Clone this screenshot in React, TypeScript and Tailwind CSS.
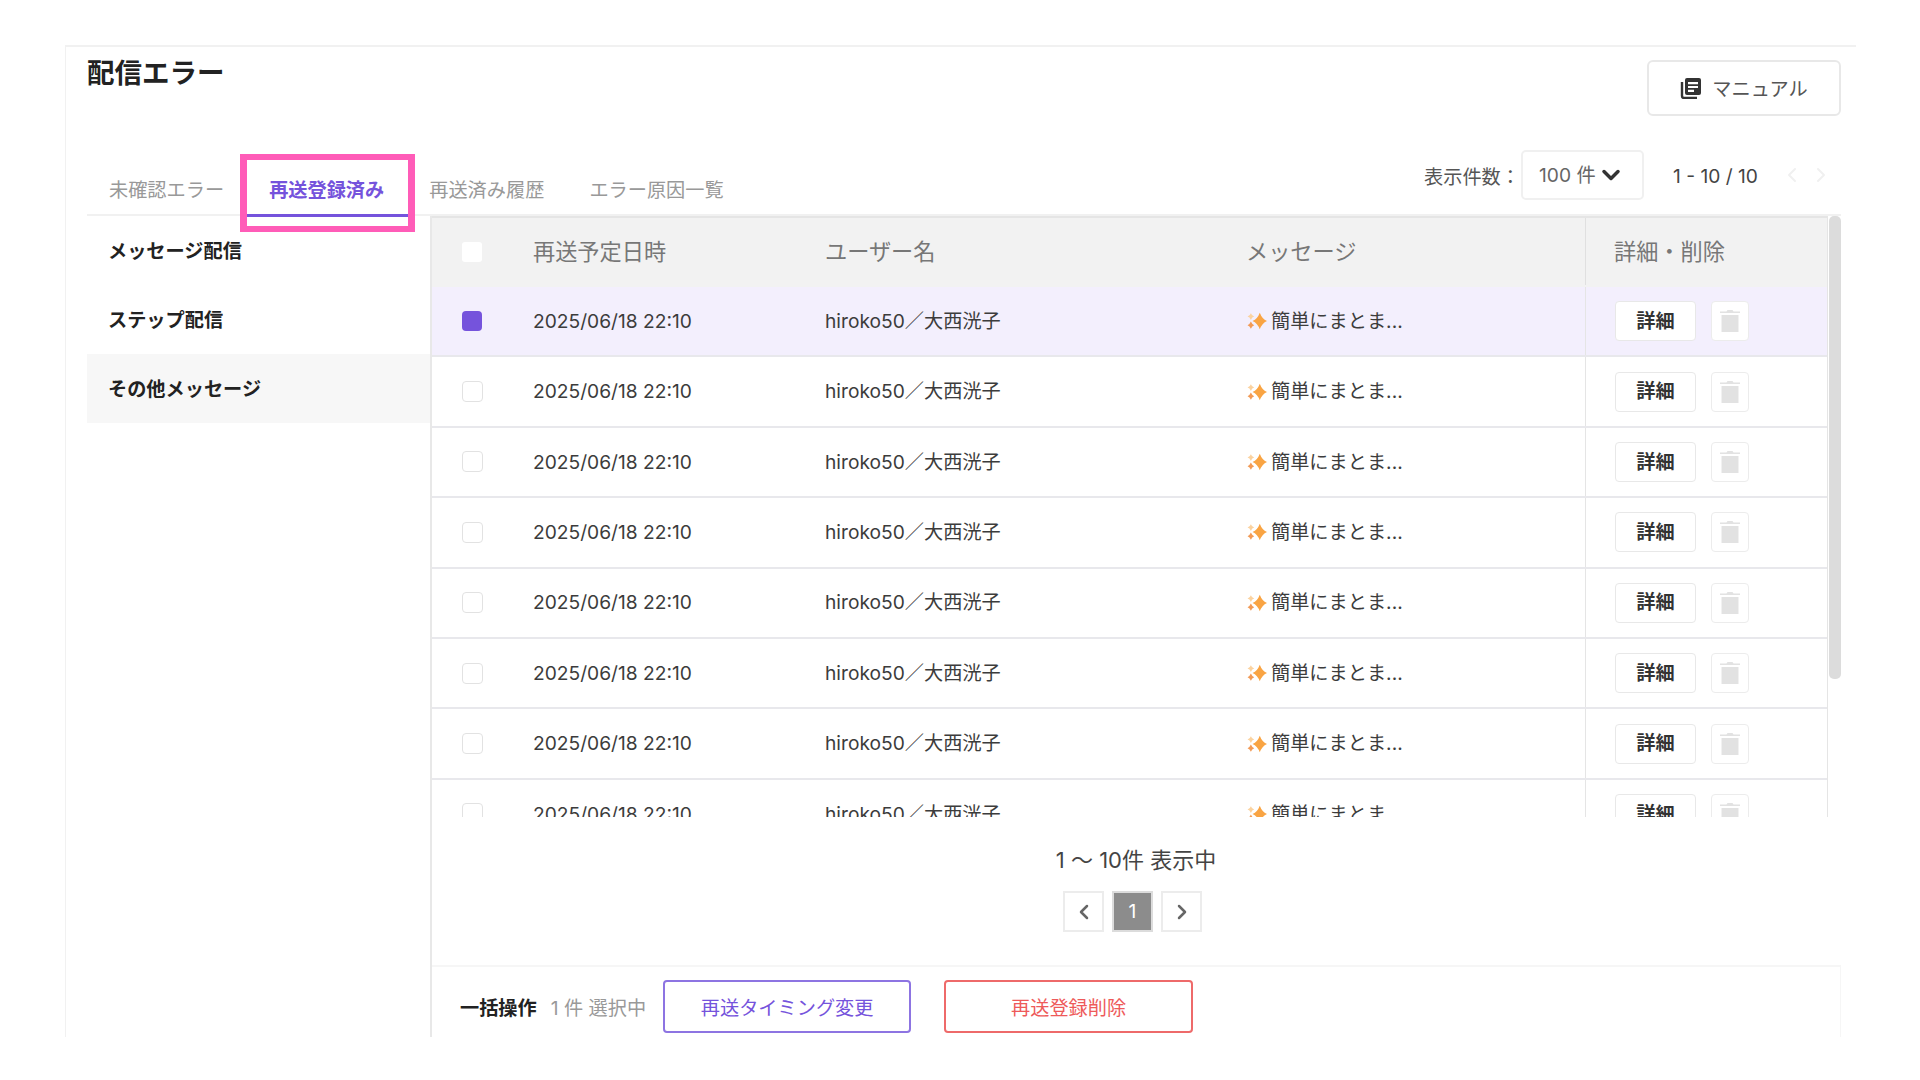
import { ChevronDown, ChevronLeft, ChevronRight } from "lucide-react";

function Sparkle() {
  return (
    <svg viewBox="0 0 18 18" className="w-[20px] h-[20px] shrink-0">
      <path d="M11.500 1.500 Q13.500 7 18 9 Q13.500 11 11.500 16.500 Q9.500 11 5 9 Q9.500 7 11.500 1.500Z" fill="#f9a443" />
      <path d="M3.500 2 Q4.500 4.500 6.500 5 Q4.500 5.500 3.500 8 Q2.500 5.500 0.500 5 Q2.500 4.500 3.500 2Z" fill="#fbd3a0" />
      <path d="M3.500 9.500 Q4.500 12 6.500 12.800 Q4.500 13.500 3.500 16 Q2.500 13.500 0.500 12.800 Q2.500 12 3.500 9.500Z" fill="#f29a55" />
    </svg>
  );
}

function Trash() {
  return (
    <svg viewBox="0 0 20 22" className="w-[20px] h-[22px]">
      <path d="M7.500 0h5l1 1.500H20v1.500H0V1.500h6.500z" fill="#e2e2e2" />
      <path d="M1.500 5h17v17h-17z" fill="#e2e2e2" />
    </svg>
  );
}

function ManualIcon() {
  return (
    <svg viewBox="0 0 22 22" className="w-[22px] h-[22px]">
      <path d="M2 5v14a2 2 0 0 0 2 2h13" fill="none" stroke="#333" strokeWidth="2.400" />
      <path d="M7 1h12a2 2 0 0 1 2 2v13a2 2 0 0 1-2 2H7a2 2 0 0 1-2-2V3a2 2 0 0 1 2-2z" fill="#333" />
      <path d="M8 5h10v2.200H8zM8 9h10v2H8zM8 12.800h6V15H8z" fill="#fff" />
    </svg>
  );
}

function Row({ selected }: { selected?: boolean }) {
  return (
    <div
      className={`grid grid-cols-[101px_292px_422px_338px_243px] h-[70.4px] shrink-0 items-center border-b-2 border-[#e8e8ec] text-[19.2px] text-[#3c3c3c] ${
        selected ? "bg-[#f3effd]" : "bg-white"
      }`}
    >
      <div className="pl-[30px]">
        {selected ? (
          <div className="w-[20px] h-[20px] rounded-[4px] bg-[#7553dc]" />
        ) : (
          <div className="w-[21px] h-[21px] rounded-[4px] border border-[#e2e2e2] bg-white" />
        )}
      </div>
      <div>2025/06/18 22:10</div>
      <div>hiroko50／大西洸子</div>
      <div className="flex items-center gap-[4px]">
        <Sparkle />
        <span>簡単にまとま...</span>
      </div>
      <div className="h-full flex items-center gap-[15px] pl-[29px] border-l border-[#e5e5e5]">
        <button className="w-[81px] h-[40px] rounded-[4px] border border-[#e8e8e8] bg-white font-bold text-[#333]">
          詳細
        </button>
        <button className="w-[38px] h-[40px] rounded-[4px] border border-[#ececec] bg-white flex items-center justify-center">
          <Trash />
        </button>
      </div>
    </div>
  );
}

export default function App() {
  const tabs = ["未確認エラー", "再送登録済み", "再送済み履歴", "エラー原因一覧"];
  return (
    <div className="w-[1920px] h-[1080px] overflow-hidden bg-white pt-[45px] pl-[65px] font-[Inter,'Noto_Sans_CJK_JP',sans-serif]">
      <div className="w-[1791px] h-[992px] border-l border-t-2 border-[#f1f1f1] overflow-hidden flex flex-col pl-[21px]">
        <div className="flex justify-between items-start pr-[15px] pt-[12px] h-[103px] shrink-0">
          <h1 className="text-[27.500px] leading-[28px] font-bold text-[#222]">配信エラー</h1>
          <button className="w-[194px] h-[56px] mt-[1px] rounded-[6px] border-2 border-[#e8e8e8] bg-white flex items-center justify-center gap-[10px] text-[19.2px] text-[#555]">
            <ManualIcon />
            <span className="pt-[3px]">マニュアル</span>
          </button>
        </div>

        <div className="flex justify-between h-[66px] shrink-0 pr-[15px]">
          <div className="flex gap-[1px] items-stretch border-b-2 border-[#f1f1f1] flex-1">
            {tabs.map((t, i) => (
              <div
                key={t}
                className={`relative pl-[22px] pt-[26px] text-[19.2px] leading-[28px] ${
                  i === 1
                    ? "pr-[24px] -mr-[2px] font-bold text-[#7553dc] border-b-[3px] border-[#7553dc] -mb-[3px]"
                    : "pr-[22px] text-[#999999]"
                }`}
              >
                {t}
                {i === 1 && (
                  <div className="absolute left-[-7px] right-[-7px] top-[4px] h-[78px] border-x-[7px] border-y-[6px] border-[#ff5cb8]" />
                )}
              </div>
            ))}
            <div className="flex-1" />
          </div>
          <div className="flex items-start text-[19.2px] text-[#555] pb-[14px] pr-[8px] border-b-2 border-[#f1f1f1] shrink-0">
            <span className="mt-[13px] shrink-0">表示件数：</span>
            <div className="w-[123px] h-[50px] ml-[1px] shrink-0 rounded-[5px] border-2 border-[#f0f0f0] flex items-center pl-[16px] gap-[1px] text-[#666]">
              <span>100 件</span>
              <ChevronDown className="w-[28px] h-[28px] text-[#333]" strokeWidth={3} />
            </div>
            <span className="ml-[29px] mt-[12px] w-[87px] shrink-0 text-[#444] whitespace-nowrap">1 - 10 / 10</span>
            <ChevronLeft className="ml-[20px] mt-[13px] w-[24px] h-[24px] shrink-0 text-[#f0f0f0]" />
            <ChevronRight className="ml-[5px] mt-[13px] w-[24px] h-[24px] shrink-0 text-[#f0f0f0]" />
          </div>
        </div>

        <div className="flex flex-1 min-h-0">
          <div className="w-[343px] shrink-0 text-[19.2px] font-bold text-[#222]">
            <div className="h-[69px] pt-[1px] flex items-center pl-[21px]">メッセージ配信</div>
            <div className="h-[69px] pt-[1px] flex items-center pl-[21px]">ステップ配信</div>
            <div className="h-[69px] pt-[1px] flex items-center pl-[21px] bg-[#f7f7f7]">その他メッセージ</div>
          </div>
          <div className="w-[1411px] shrink-0 border-l-2 border-[#e8e8e8] flex flex-col">
            <div className="h-[601px] shrink-0 flex overflow-hidden">
              <div className="w-[1396px] shrink-0 flex flex-col border-t-2 border-r border-[#e5e5e5] overflow-hidden">
                <div className="grid grid-cols-[101px_292px_422px_338px_243px] h-[69px] pb-[2px] shrink-0 items-center bg-[#f2f2f2] text-[22.2px] text-[#777]">
                  <div className="pl-[30px]">
                    <div className="w-[20px] h-[20px] rounded-[3px] bg-white" />
                  </div>
                  <div>再送予定日時</div>
                  <div>ユーザー名</div>
                  <div className="-ml-[1px]">メッセージ</div>
                  <div className="h-full flex items-center pl-[28px] border-l border-[#e0e0e0]">詳細・削除</div>
                </div>
                <Row selected />
                {[0, 1, 2, 3, 4, 5, 6, 7, 8].map((i) => (
                  <Row key={i} />
                ))}
              </div>
              <div className="w-[12px] h-[463px] ml-[1px] rounded-[5px] bg-[#dcdcdc]" />
            </div>

            <div className="h-[148px] shrink-0 flex flex-col items-center pr-[8px] pt-[28px]">
              <div className="text-[22px] leading-[30px] text-[#444] pl-[7px]">1 〜 10件 表示中</div>
              <div className="flex gap-[8px] mt-[16px]">
                <div className="w-[41px] h-[41px] border-2 border-[#ececec] flex items-center justify-center">
                  <ChevronLeft className="w-[24px] h-[24px] text-[#666]" strokeWidth={2.500} />
                </div>
                <div className="w-[41px] h-[41px] bg-[#8c8c8c] border-2 border-[#dcdcdc] text-white flex items-center justify-center text-[19.2px]">
                  1
                </div>
                <div className="w-[41px] h-[41px] border-2 border-[#ececec] flex items-center justify-center">
                  <ChevronRight className="w-[24px] h-[24px] text-[#666]" strokeWidth={2.500} />
                </div>
              </div>
            </div>

            <div className="flex-1 border-t-2 border-r border-[#f6f6f6] flex items-start pl-[28px] pt-[13px] text-[19.2px]">
              <span className="font-bold text-[#222] mt-[14px] leading-[28px]">一括操作</span>
              <span className="ml-[14px] text-[#999] mt-[14px] leading-[28px]">1 件 選択中</span>
              <button className="ml-[17px] w-[248px] h-[53px] pt-[3px] rounded-[4px] border-2 border-[#8d74e2] text-[#7553dc] bg-white">
                再送タイミング変更
              </button>
              <button className="ml-[33px] w-[249px] h-[53px] pt-[3px] rounded-[4px] border-2 border-[#ee6a6a] text-[#ee5a5a] bg-white">
                再送登録削除
              </button>
            </div>
          </div>
        </div>
      </div>
    </div>
  );
}
